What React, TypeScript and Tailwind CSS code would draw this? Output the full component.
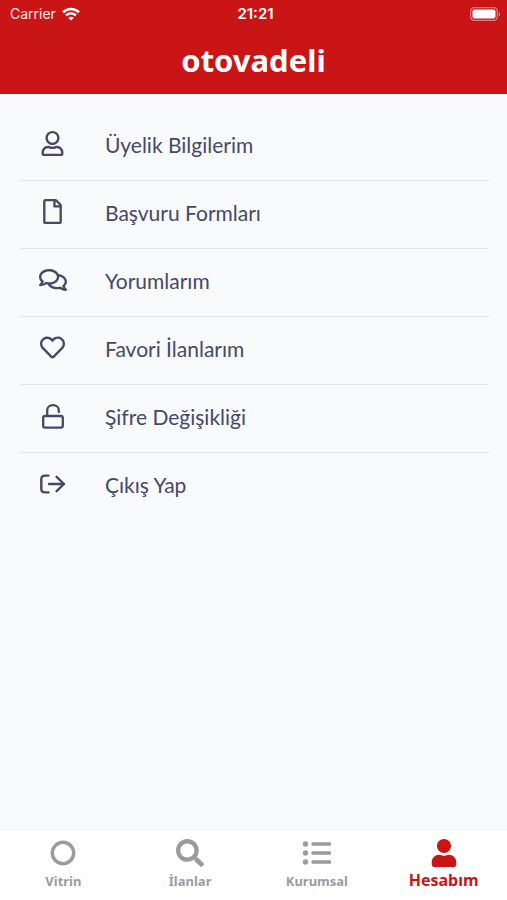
import type { ReactNode } from "react";
import { FaRegComments, FaRegFile, FaRegHeart, FaRegUser, FaSearch, FaUser } from "react-icons/fa";

function WifiIcon() {
  return (
    <svg viewBox="0 0 18 14" className="h-[14px] w-[18px]" fill="none" stroke="currentColor" strokeWidth="2.6" aria-hidden="true">
      <path d="M1 5.2C5.6 .9 12.4 .9 17 5.2" />
      <path d="M4 8.4C6.9 5.8 11.1 5.8 14 8.4" />
      <path d="M9 13.5L6.2 10.7C7.8 9.3 10.2 9.3 11.8 10.7Z" fill="currentColor" stroke="none" />
    </svg>
  );
}

function BatteryIcon() {
  return (
    <svg viewBox="0 0 31 14" className="h-[14px] w-[31px]" aria-hidden="true">
      <rect x="0.7" y="0.7" width="26.6" height="12.6" rx="3.6" fill="none" stroke="#fff" strokeOpacity="0.45" strokeWidth="1.2" />
      <rect x="2.5" y="2.5" width="23" height="9" rx="2" fill="#fff" />
      <path d="M28.7 5V9.5C30.5 8.8 30.5 5.7 28.7 5Z" fill="#fff" fillOpacity="0.5" />
    </svg>
  );
}

function UnlockIcon() {
  return (
    <svg viewBox="0 0 22 26" className="h-[26px] w-[22px]" fill="none" stroke="currentColor" strokeWidth="2.3" strokeLinecap="round" aria-hidden="true">
      <rect x="1.2" y="13" width="19.6" height="11.6" rx="1.8" />
      <path d="M5.2 12.6V7.4C5.2 4.4 7.8 2.2 11 2.2S16.8 4.4 16.8 7.4V9" />
    </svg>
  );
}

function SignOutIcon() {
  return (
    <svg viewBox="0 0 26 20" className="h-[20px] w-[26px]" fill="none" stroke="currentColor" strokeWidth="2.4" strokeLinecap="round" strokeLinejoin="round" aria-hidden="true">
      <path d="M8.5 1.6H5C2.6 1.6 1.3 2.9 1.3 5.3V14.7C1.3 17.1 2.6 18.4 5 18.4H8.5" />
      <path d="M9 10H24M16.600 2.800L24 10L16.600 17.200" />
    </svg>
  );
}

function RingIcon() {
  return (
    <svg viewBox="0 0 26 26" className="h-[26px] w-[26px]" aria-hidden="true">
      <circle cx="13" cy="13" r="10.7" fill="none" stroke="currentColor" strokeWidth="3.4" />
    </svg>
  );
}

function ListIcon() {
  return (
    <svg viewBox="0 0 30 24" className="h-[24px] w-[30px]" fill="currentColor" aria-hidden="true">
      <circle cx="3.5" cy="3" r="2.7" />
      <circle cx="3.5" cy="12" r="2.7" />
      <circle cx="3.5" cy="21" r="2.7" />
      <rect x="9.5" y="1.3" width="19.5" height="3.4" rx="0.8" />
      <rect x="9.5" y="10.3" width="19.5" height="3.4" rx="0.8" />
      <rect x="9.5" y="19.3" width="19.5" height="3.4" rx="0.8" />
    </svg>
  );
}

const menu: { label: string; icon: ReactNode }[] = [
  { label: "Üyelik Bilgilerim", icon: <FaRegUser size={25} /> },
  { label: "Başvuru Formları", icon: <FaRegFile size={25} /> },
  { label: "Yorumlarım", icon: <FaRegComments size={28} /> },
  { label: "Favori İlanlarım", icon: <FaRegHeart size={25} /> },
  { label: "Şifre Değişikliği", icon: <UnlockIcon /> },
  { label: "Çıkış Yap", icon: <SignOutIcon /> },
];

const tabs: { label: string; icon: ReactNode; active?: boolean }[] = [
  { label: "Vitrin", icon: <RingIcon /> },
  { label: "İlanlar", icon: <FaSearch size={28} /> },
  { label: "Kurumsal", icon: <ListIcon /> },
  { label: "Hesabım", icon: <FaUser size={28} />, active: true },
];

export default function App() {
  return (
    <div className="flex min-h-screen flex-col bg-[#f8fafc] font-['Lato',sans-serif] text-[#474866]">
      <header className="bg-[#ca1517] text-white">
        <div className="grid h-7 grid-cols-3 items-center pr-1.5 pl-2.5 font-['Inter',sans-serif] text-sm">
          <span className="flex items-center gap-1.5">
            <span className="opacity-90">Carrier</span>
            <WifiIcon />
          </span>
          <span className="text-center text-[15px] font-semibold">21:21</span>
          <span className="flex justify-end">
            <BatteryIcon />
          </span>
        </div>
        <h1 className="pt-2.5 pb-3 text-center font-['Noto_Sans',sans-serif] text-[31px] leading-[44px] font-bold">otovadeli</h1>
      </header>

      <main className="grow pt-[19px] pr-[18px] pl-5">
        <ul>
          {menu.map((item) => (
            <li key={item.label} className="border-b border-[#e4e6e9] last:border-b-0">
              <button type="button" className="flex h-[67px] w-full cursor-pointer items-center pb-[3px] text-left text-[21px] leading-7">
                <span className="mr-5 flex w-[65px] justify-center pb-[3px]">{item.icon}</span>
                {item.label}
              </button>
            </li>
          ))}
        </ul>
      </main>

      <nav className="grid grid-cols-4 border-t border-[#f2f4f6] bg-white pb-1.5 font-['Noto_Sans',sans-serif] font-bold">
        {tabs.map((tab) => (
          <a
            key={tab.label}
            href="#"
            aria-current={tab.active ? "page" : undefined}
            className={
              tab.active
                ? "flex flex-col items-center pt-2 text-base leading-6 text-[#ca1517]"
                : "flex flex-col items-center pt-2 text-[13px] leading-[26px] text-[#9b9b9b]"
            }
          >
            <span className="flex h-[30px] items-center">{tab.icon}</span>
            {tab.label}
          </a>
        ))}
      </nav>
    </div>
  );
}
